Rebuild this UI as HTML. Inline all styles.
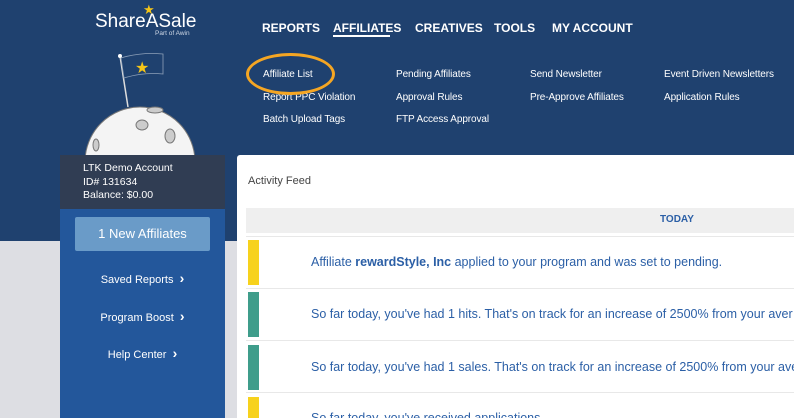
<!DOCTYPE html>
<html><head><style>
*{margin:0;padding:0;box-sizing:border-box}
html,body{width:794px;height:418px;overflow:hidden}
body{background:#dddee3;font-family:"Liberation Sans",sans-serif}
#w{position:relative;width:794px;height:418px;overflow:hidden}
.top{position:absolute;left:0;top:0;width:794px;height:241px;background:#1f416f}
.a{position:absolute;white-space:nowrap}
.nav{color:#fff;font-weight:bold;font-size:12px;top:21px}
.sub{color:#fff;font-size:10px;letter-spacing:-0.1px}
.side{position:absolute;left:60px;top:155px;width:165px;height:263px;background:#23579b}
.acct{position:absolute;left:60px;top:155px;width:165px;height:54px;background:#303d53;color:#fff;font-size:10.5px;line-height:13.5px;padding:7px 0 0 23px}
.btn{position:absolute;left:75px;top:217px;width:135px;height:34px;background:#6a9bc8;color:#fff;font-size:13px;text-align:center;line-height:34px;border-radius:2px}
.sl{color:#fff;font-size:11px;left:60px;width:165px;text-align:center}
.sl b{font-size:14px}
.panel{position:absolute;left:237px;top:155px;width:557px;height:263px;background:#fff;border-radius:3px 0 0 0}
.row{position:absolute;left:246px;width:548px;border-top:1px solid #e8e8e8}
.bar{position:absolute;left:248px;width:11px}
.txt{color:#2b5fa6;font-size:12.5px;left:311px}
</style></head><body><div id="w">
<div class="top"></div>
<div class="a" style="left:95px;top:11px;color:#fff;font-size:19px">ShareASale</div>
<div class="a" style="left:143px;top:2px;color:#f5c518;font-size:13px">★</div>
<div class="a" style="left:155px;top:30px;color:#cfd8e6;font-size:6.5px">Part of Awin</div>
<div class="a nav" style="left:262px">REPORTS</div>
<div class="a nav" style="left:333px">AFFILIATES</div>
<div class="a" style="left:333px;top:35px;width:57px;height:2px;background:#fff"></div>
<div class="a nav" style="left:415px">CREATIVES</div>
<div class="a nav" style="left:494px">TOOLS</div>
<div class="a nav" style="left:552px">MY ACCOUNT</div>
<div class="a sub" style="left:263px;top:69px">Affiliate List</div>
<div class="a sub" style="left:263px;top:92px">Report PPC Violation</div>
<div class="a sub" style="left:263px;top:114px">Batch Upload Tags</div>
<div class="a sub" style="left:396px;top:69px">Pending Affiliates</div>
<div class="a sub" style="left:396px;top:92px">Approval Rules</div>
<div class="a sub" style="left:396px;top:114px">FTP Access Approval</div>
<div class="a sub" style="left:530px;top:69px">Send Newsletter</div>
<div class="a sub" style="left:530px;top:92px">Pre-Approve Affiliates</div>
<div class="a sub" style="left:664px;top:69px">Event Driven Newsletters</div>
<div class="a sub" style="left:664px;top:92px">Application Rules</div>
<div class="a" style="left:246px;top:53px;width:89px;height:42px;border:3px solid #f5a623;border-radius:50%"></div>
<svg class="a" style="left:80px;top:50px" width="120" height="110">
<line x1="40" y1="6" x2="48" y2="57" stroke="#ddd" stroke-width="1.5"/>
<circle cx="40" cy="6" r="2" fill="#fff"/>
<path d="M41 8 Q60 2 83 4 L83 24 Q63 22 44 28 Z" fill="#1f416f" stroke="#8ea0b8" stroke-width="0.8"/>
<text x="55" y="23" fill="#f5c518" font-size="16">★</text>
<circle cx="60" cy="112" r="55" fill="#f4f4f4" stroke="#777"/>
<ellipse cx="62" cy="75" rx="6" ry="5" fill="#ccc" stroke="#777"/>
<ellipse cx="90" cy="86" rx="5" ry="7" fill="#ccc" stroke="#777"/>
<ellipse cx="16" cy="95" rx="3" ry="6" fill="#ccc" stroke="#777"/>
<ellipse cx="75" cy="60" rx="8" ry="3" fill="#ccc" stroke="#777"/>
</svg>
<div class="side"></div>
<div class="acct">LTK Demo Account<br>ID# 131634<br>Balance: $0.00</div>
<div class="btn">1 New Affiliates</div>
<div class="a sl" style="top:270px">Saved Reports &nbsp;<b>›</b></div>
<div class="a sl" style="top:308px">Program Boost &nbsp;<b>›</b></div>
<div class="a sl" style="top:345px">Help Center &nbsp;<b>›</b></div>
<div class="panel"></div>
<div class="a" style="left:248px;top:175px;font-size:11px;color:#444">Activity Feed</div>
<div class="a" style="left:246px;top:208px;width:548px;height:25px;background:#efefef"></div>
<div class="a" style="left:660px;top:214px;font-size:10px;font-weight:bold;color:#2b5fa6">TODAY</div>
<div class="row" style="top:236px"></div>
<div class="row" style="top:288px"></div>
<div class="row" style="top:340px"></div>
<div class="row" style="top:392px"></div>
<div class="bar" style="top:240px;height:45px;background:#f7d21d"></div>
<div class="bar" style="top:292px;height:45px;background:#3f9d8b"></div>
<div class="bar" style="top:345px;height:45px;background:#3f9d8b"></div>
<div class="bar" style="top:397px;height:21px;background:#f7d21d"></div>
<div class="a txt" style="top:255px">Affiliate <b>rewardStyle, Inc</b> applied to your program and was set to pending.</div>
<div class="a txt" style="top:307px">So far today, you've had 1 hits. That's on track for an increase of 2500% from your aver</div>
<div class="a txt" style="top:360px">So far today, you've had 1 sales. That's on track for an increase of 2500% from your ave</div>
<div class="a txt" style="top:411px;height:7px;overflow:hidden">So far today, you've received applications</div>
</div></body></html>
